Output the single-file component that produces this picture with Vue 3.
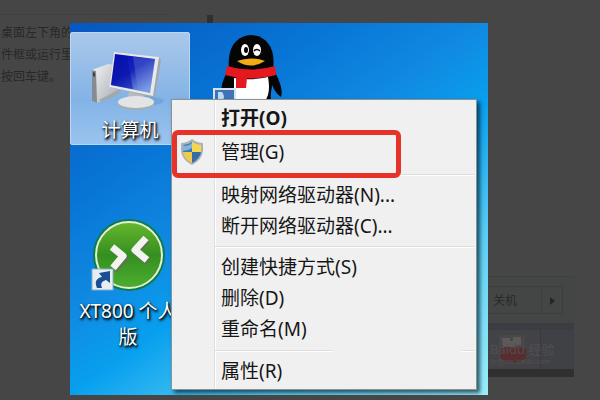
<template>
    <div class="page">
        <div class="article">
            <p>桌面左下角的</p>
            <p>件框或运行里</p>
            <p>按回车键。</p>
        </div>
        <span class="page-mark"></span>
        <div class="shot">
            <div class="shutdown">
                <button type="button" class="shutdown-main">关机</button>
                <button type="button" class="shutdown-more" aria-label="更多">
                    <svg width="5" height="8" viewBox="0 0 5 8"><path d="M0 0L5 4L0 8Z" fill="#252525" /></svg>
                </button>
            </div>
            <div class="taskbar">
                <svg class="stamp" width="30" height="30" viewBox="0 0 30 30">
                    <rect x="1" y="1" width="26" height="26" fill="#4a4748" />
                    <path d="M4 4h8v3h3v-4h8v8h-4v3H5z" fill="#5d595a" />
                    <path d="M2 16q3-4 9-3q9-1 17 2v9q-7 5-15 4q-8 0-11-5z" fill="#592c2e" />
                </svg>
                <div class="watermark">
                    <span>Baidu 经验</span>
                    <small>jingyan.baidu.com</small>
                </div>
            </div>
        </div>
        <div class="viewer">
            <div class="desktop">
                <div class="tile computer">
                    <svg class="computer-icon" width="76" height="62" viewBox="0 0 76 62">
                        <defs>
                            <linearGradient id="screen" x1="0" y1="0" x2="0.7" y2="1">
                                <stop offset="0" stop-color="#0710b8" />
                                <stop offset="0.5" stop-color="#1422b8" />
                                <stop offset="1" stop-color="#7fa2e8" />
                            </linearGradient>
                            <linearGradient id="metal" x1="0" y1="0" x2="1" y2="1">
                                <stop offset="0" stop-color="#f3f4f5" />
                                <stop offset="1" stop-color="#a9adb3" />
                            </linearGradient>
                        </defs>
                        <ellipse cx="52" cy="50" rx="22" ry="5" fill="#6b9dd0" opacity="0.6" />
                        <path d="M2 19L18 13L27 14V42L7 52L2 50Z" fill="url(#metal)" />
                        <path d="M2 19L6 20L7 52L2 50Z" fill="#868b91" />
                        <path d="M3 21L5 22V26L3 25Z" fill="#3d4245" />
                        <path d="M9 49L28 39L31 42L13 51Z" fill="#a3a8b0" />
                        <path d="M39 40L54 42L52 52H37Z" fill="#b7bbc0" />
                        <ellipse cx="46" cy="53" rx="18" ry="6" fill="#a9adb1" />
                        <ellipse cx="46" cy="51" rx="18" ry="6" fill="#e3e4e5" />
                        <path d="M24 1L68 6L71 9L65 45L61 46L19 36Z" fill="#a2a6aa" />
                        <path d="M24 1L69 6L63 45L19 36Z" fill="#e7e8ea" />
                        <path d="M25 3L65 8L60 42L21 34Z" fill="url(#screen)" />
                        <path d="M43 6L65 8L60 42L48 39Z" fill="#7691df" opacity="0.3" />
                        <path d="M26 4L37 5L43 38L21 34Z" fill="#030da4" opacity="0.5" />
                    </svg>
                    <span class="caption">计算机</span>
                </div>

                <div class="tile qq">
                    <svg width="70" height="66" viewBox="0 0 70 66">
                        <path d="M17 32C10 40 6 52 8 60H20V66H57C56 58 58 54 58 50C60 55 64 60 67 62C70 54 63 40 58 32Z" fill="#050505" />
                        <path d="M15 34C13 14 21 1 37 0C53 1 62 14 59 34Z" fill="#050505" />
                        <path d="M20 43Q37 46 54 42Q57 58 51 66H20Z" fill="#fff" />
                        <path d="M13 31Q38 38 61 31L62 40Q38 47 11 40Z" fill="#e51820" />
                        <path d="M22 42L33 43L32 53H22Z" fill="#e51820" />
                        <ellipse cx="31" cy="15" rx="4" ry="6" fill="#fff" />
                        <ellipse cx="43" cy="15" rx="4" ry="6" fill="#fff" />
                        <ellipse cx="32" cy="15" rx="2" ry="3" fill="#050505" />
                        <path d="M40 16Q43 13 46 16" fill="none" stroke="#050505" stroke-width="1.5" />
                        <path d="M23 26Q37 21 51 26Q37 35 23 26Z" fill="#f3ad12" />
                        <rect x="0" y="54" width="21" height="18" fill="#4073b7" stroke="#d5e3ef" stroke-width="2" />
                        <path d="M4 66V57H8Q12 62 8 66Z" fill="#bcdcf5" />
                    </svg>
                </div>

                <div class="tile xt">
                    <svg width="76" height="76" viewBox="0 0 76 76">
                        <defs>
                            <linearGradient id="leaf" x1="0" y1="0" x2="0" y2="1">
                                <stop offset="0" stop-color="#67b72e" />
                                <stop offset="0.5" stop-color="#358f20" />
                                <stop offset="1" stop-color="#4cae30" />
                            </linearGradient>
                        </defs>
                        <circle cx="39" cy="37" r="36" fill="#0b7c48" />
                        <circle cx="39" cy="37" r="33" fill="url(#leaf)" stroke="#e4efd8" stroke-width="2" />
                        <g fill="none" stroke-width="7" stroke-linejoin="round">
                            <path d="M23 31L35 40L24 52M57 22L46 34L58 44" stroke="#5f7352" />
                            <path d="M22 29L33 38L23 50M56 20L45 32L57 42" stroke="#f3f3ef" />
                        </g>
                        <rect x="2" y="51" width="21" height="21" fill="#e6eef4" stroke="#8bacc2" />
                        <path d="M7 70Q3 61 12 59L9 55L20 53V65L16 62Q9 64 12 70Z" fill="#1b4d93" />
                    </svg>
                    <span class="caption">XT800 个人版</span>
                </div>

                <div class="menu" role="menu">
                    <template v-for="item in items" :key="item.id">
                        <hr v-if="item.line" class="line" :class="{ broken: item.broken }" />
                        <button v-else type="button" role="menuitem" class="item" :class="item.kind">
                            <span class="gutter">
                                <svg v-if="item.kind === 'manage'" width="22" height="26" viewBox="0 0 22 26">
                                    <path d="M11 0Q16 4 22 4V12Q21 21 11 26Q1 21 0 12V4Q6 4 11 0Z" fill="#a9b2b8" />
                                    <path d="M11 3V13H2V6Q7 6 11 3Z" fill="#3c78b4" />
                                    <path d="M11 3Q15 6 20 6V13H11Z" fill="#f5d552" />
                                    <path d="M2 13H11V24Q3 20 2 13Z" fill="#f0cb4a" />
                                    <path d="M11 13H20Q19 20 11 24Z" fill="#356ca5" />
                                    <path d="M4 7Q8 7 11 4V9Q7 12 2 12V6Z" fill="#b9dcec" opacity="0.6" />
                                </svg>
                            </span>
                            <span>{{ item.text }}</span>
                        </button>
                    </template>
                </div>
                <div class="highlight"></div>
            </div>
        </div>
    </div>
</template>

<script setup>
import { ref } from 'vue'

let id = 0
const items = ref([
    { id: id++, text: '打开(O)', kind: 'open' },
    { id: id++, text: '管理(G)', kind: 'manage' },
    { id: id++, line: true },
    { id: id++, text: '映射网络驱动器(N)...' },
    { id: id++, text: '断开网络驱动器(C)...' },
    { id: id++, line: true },
    { id: id++, text: '创建快捷方式(S)' },
    { id: id++, text: '删除(D)' },
    { id: id++, text: '重命名(M)' },
    { id: id++, line: true, broken: true },
    { id: id++, text: '属性(R)' }
])
</script>

<style>
body {
    background: #464646;
}
</style>

<style scoped>
.page {
    position: relative;
    display: flex;
    flex-direction: column;
    justify-content: space-between;
    box-sizing: border-box;
    min-height: 100vh;
    padding: 14px 0 23px;
    overflow: hidden;
    background: #464646;
    font-family: "Noto Sans", "Noto Sans CJK SC", sans-serif;
}
.article {
    width: 170px;
    padding: 6px 0 0 1px;
    box-sizing: border-box;
    border-top: 1px solid #404040;
    color: #282828;
    font: 12px/22px "Noto Sans CJK SC", sans-serif;
}
.article p {
    margin: 0;
}
.page-mark {
    position: absolute;
    left: 207px;
    top: 15px;
    width: 6px;
    height: 10px;
    background: #303032;
}
button {
    margin: 0;
    padding: 0;
    border: 0;
    background: none;
    font: inherit;
    color: inherit;
}
.shot {
    align-self: flex-end;
    width: 86px;
    margin-right: 26px;
    border-top: 1px solid #404040;
    border-bottom: 8px solid #303030;
    background: #444645;
}
.shutdown {
    display: flex;
    height: 26px;
    margin: 9px 11px 9px 0;
    border: 1px solid #3c3c3c;
    border-left: 0;
    border-radius: 2px;
    color: #292929;
    font: 12px/26px "Noto Sans CJK SC", sans-serif;
}
.shutdown-main {
    flex: 1;
    padding-left: 5px;
    text-align: left;
}
.shutdown-more {
    width: 21px;
    border-left: 1px solid #3e3e3e;
}
.taskbar {
    position: relative;
    height: 46px;
    box-sizing: border-box;
    padding: 4px 10px;
    border-top: 7px solid #3c3d42;
    background: linear-gradient(90deg, #434347 52px, #38393d 52px, #38393d 53px, #404146 53px);
}
.stamp {
    display: block;
}
.watermark {
    position: absolute;
    left: 2px;
    top: 11px;
    display: flex;
    flex-direction: column;
    color: #4e4f52;
    font-size: 13px;
    line-height: 16px;
    white-space: nowrap;
}
.watermark small {
    font-size: 7px;
    line-height: 10px;
}
.viewer {
    position: absolute;
    inset: 0;
    display: flex;
    padding: 23px 112px 5px 70px;
}
.desktop {
    position: relative;
    flex: 1;
    overflow: hidden;
    background: linear-gradient(145deg, #0757c0 0%, #0876d6 28%, #108ae2 44%, #08a0ee 56%, #5fd0f5 77%, #9beefa 100%);
}
.tile {
    position: absolute;
    display: flex;
    flex-direction: column;
    align-items: center;
}
.computer {
    left: 0;
    top: 9px;
    width: 120px;
    height: 113px;
    box-sizing: border-box;
    padding-top: 18px;
    border: 1px solid #b8d9f5;
    border-radius: 2px;
    background: linear-gradient(#a9c8ea, #83b3e6 60%, #9ac4ef);
}
.computer-icon {
    margin-right: 4px;
}
.qq {
    left: 144px;
    top: 12px;
}
.qq svg {
    overflow: visible;
}
.xt {
    left: 6px;
    top: 195px;
    width: 104px;
}
.caption {
    margin-top: 4px;
    color: #fff;
    font-size: 19px;
    line-height: 26px;
    text-align: center;
    text-shadow: 1px 1px 2px #000, 1px 2px 3px #000;
}
.menu {
    position: absolute;
    left: 101px;
    top: 76px;
    width: 306px;
    box-sizing: border-box;
    padding: 3px 2px 2px;
    border: 1px solid #8a9296;
    background: linear-gradient(90deg, #f0f0f0 42px, #dfe0e1 42px, #dfe0e1 43px, #fff 43px, #fff 44px, #f0f0f0 44px);
    box-shadow: 3px 3px 4px rgba(0, 30, 45, 0.7);
}
.item {
    display: flex;
    align-items: center;
    width: 100%;
    height: 31px;
    color: #161616;
    font-size: 19px;
    line-height: 31px;
    text-align: left;
    white-space: nowrap;
}
.item.open {
    font-weight: bold;
}
.item.manage {
    height: 36px;
}
.gutter {
    display: flex;
    width: 47px;
    padding-left: 7px;
    box-sizing: border-box;
}
.line {
    height: 1px;
    margin: 4px 0 4px 41px;
    border: 0;
    border-top: 1px solid #dcdcdc;
    background: #fff;
}
.line.broken {
    margin-top: 5px;
    background: linear-gradient(90deg, #fff 117px, #f0f0f0 117px, #f0f0f0 246px, #fff 246px);
    border-image: linear-gradient(90deg, #dcdcdc 117px, #f0f0f0 117px, #f0f0f0 246px, #dcdcdc 246px) 1;
}
.highlight {
    position: absolute;
    left: 102px;
    top: 107px;
    width: 229px;
    height: 48px;
    box-sizing: border-box;
    border: 5px solid #e5332a;
    border-radius: 6px;
}
</style>
